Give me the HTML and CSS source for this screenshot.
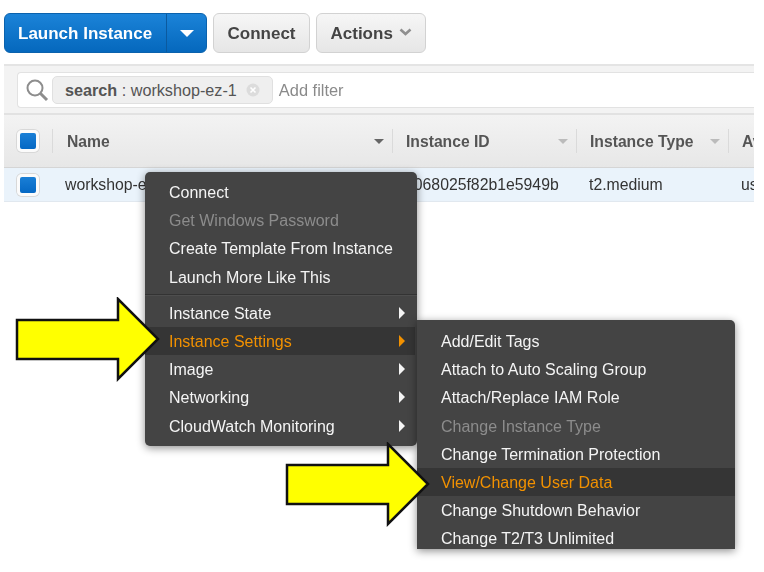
FILE: index.html
```html
<!DOCTYPE html>
<html lang="en">
<head>
    <meta charset="UTF-8">
    <meta name="viewport" content="width=device-width, initial-scale=1.0">
    <title>Instances</title>
    <link rel="stylesheet" href="styles.css">
</head>
<body>
    <div class="page">
        <div class="toolbar">
            <div class="btn-primary">
                <span class="btn-primary-label">Launch Instance</span>
                <span class="btn-primary-caret"><span class="caret-white"></span></span>
            </div>
            <div class="btn">Connect</div>
            <div class="btn">Actions
                <svg class="chevron" width="13" height="8" viewBox="0 0 13 8"><path d="M1.5 1.5 L6.5 6 L11.5 1.5" fill="none" stroke="#8f8f8f" stroke-width="2.6"/></svg>
            </div>
        </div>

        <div class="filter-panel">
            <div class="filter-box">
                <svg class="search-icon" width="24" height="24" viewBox="0 0 24 24">
                    <circle cx="10" cy="10" r="7.5" fill="none" stroke="#8d8d8d" stroke-width="2"/>
                    <path d="M15.5 15.5 L22 22" stroke="#8d8d8d" stroke-width="3"/>
                </svg>
                <div class="token">
                    <span><b>search</b> : workshop-ez-1</span>
                    <svg width="14" height="14" viewBox="0 0 14 14">
                        <circle cx="7" cy="7" r="6.5" fill="#dcdcdc"/>
                        <path d="M4.5 4.5 L9.5 9.5 M9.5 4.5 L4.5 9.5" stroke="#fff" stroke-width="1.6"/>
                    </svg>
                </div>
                <span class="add-filter">Add filter</span>
            </div>
        </div>

        <div class="table-row table-head">
            <div class="cell-check"><span class="check"></span></div>
            <div class="cell cell-name">Name<span class="sort sort-dark"></span></div>
            <div class="cell cell-id">Instance ID<span class="sort"></span></div>
            <div class="cell cell-type">Instance Type<span class="sort"></span></div>
            <div class="cell cell-zone">Av</div>
        </div>
        <div class="table-row table-body">
            <div class="cell-check"><span class="check"></span></div>
            <div class="cell cell-name">workshop-ez-1</div>
            <div class="cell cell-id">i-068025f82b1e5949b</div>
            <div class="cell cell-type">t2.medium</div>
            <div class="cell cell-zone">us</div>
        </div>

        <div class="menu menu-main">
            <div class="menu-item">Connect</div>
            <div class="menu-item disabled">Get Windows Password</div>
            <div class="menu-item">Create Template From Instance</div>
            <div class="menu-item">Launch More Like This</div>
            <div class="menu-divider"></div>
            <div class="menu-item has-sub">Instance State</div>
            <div class="menu-item has-sub active">Instance Settings</div>
            <div class="menu-item has-sub">Image</div>
            <div class="menu-item has-sub">Networking</div>
            <div class="menu-item has-sub">CloudWatch Monitoring</div>
        </div>

        <div class="menu menu-sub">
            <div class="menu-item">Add/Edit Tags</div>
            <div class="menu-item">Attach to Auto Scaling Group</div>
            <div class="menu-item">Attach/Replace IAM Role</div>
            <div class="menu-item disabled">Change Instance Type</div>
            <div class="menu-item">Change Termination Protection</div>
            <div class="menu-item active">View/Change User Data</div>
            <div class="menu-item">Change Shutdown Behavior</div>
            <div class="menu-item">Change T2/T3 Unlimited</div>
        </div>

        <svg class="arrow arrow-one" width="146" height="86" viewBox="0 0 146 86">
            <path d="M2 23 H103 V2 L143 42 L103 82 V62 H2 Z" fill="#ffff00" stroke="#111" stroke-width="2.5"/>
        </svg>
        <svg class="arrow arrow-two" width="146" height="86" viewBox="0 0 146 86">
            <path d="M2 23 H103 V2 L143 42 L103 82 V62 H2 Z" fill="#ffff00" stroke="#111" stroke-width="2.5"/>
        </svg>
    </div>
</body>
</html>
```

FILE: styles.css
```css
html, body {
    margin: 0;
    padding: 0;
    background-color: #fff;
}

body {
    width: 764px;
    height: 572px;
    overflow: hidden;
    font-family: "Liberation Sans", Arial, sans-serif;
    font-size: 15.8px;
    color: #333;
}

.page {
    position: relative;
    width: 754px;
    height: 572px;
    overflow: hidden;
    padding-top: 13px;
    box-sizing: border-box;
    filter: blur(0.6px);
}

/* toolbar */
.toolbar {
    display: flex;
    gap: 6px;
    height: 40px;
    margin: 0 0 11px 4px;
}

.btn-primary {
    display: flex;
    width: 203px;
    background: linear-gradient(#1b83d8, #0568bd);
    border: 1px solid #0a62ad;
    border-radius: 6px;
    box-sizing: border-box;
    color: #fff;
    font-size: 17px;
    font-weight: bold;
}

.btn-primary-label {
    flex: 1;
    padding-left: 13px;
    line-height: 40px;
}

.btn-primary-caret {
    width: 39px;
    border-left: 1px solid #0b5a9f;
    display: flex;
    align-items: center;
    justify-content: center;
}

.caret-white {
    border-left: 7px solid transparent;
    border-right: 7px solid transparent;
    border-top: 7px solid #fff;
}

.btn {
    display: flex;
    align-items: center;
    gap: 6px;
    padding: 2px 13.5px 0;
    background: linear-gradient(#f6f6f6, #e6e6e6);
    border: 1px solid #d2d2d2;
    border-radius: 6px;
    color: #444;
    font-size: 17px;
    font-weight: bold;
}

.chevron {
    margin-top: -4px;
}

/* filter */
.filter-panel {
    margin-left: 4px;
    height: 51px;
    padding: 6px 0 0 13px;
    box-sizing: border-box;
    background-color: #f3f3f3;
    border-top: 2px solid #e4e4e4;
    border-bottom: 2px solid #e2e2e2;
}

.filter-box {
    display: flex;
    align-items: center;
    height: 36px;
    box-sizing: border-box;
    margin-right: -1px;
    padding-left: 7px;
    background-color: #fff;
    border: 1px solid #e2e2e2;
    border-right: none;
    border-radius: 4px 0 0 4px;
}

.search-icon {
    margin-right: 3px;
}

.token {
    display: flex;
    align-items: center;
    gap: 9px;
    height: 26px;
    padding: 0 12px;
    background-color: #efefef;
    border: 1px solid #e0e0e0;
    border-radius: 5px;
    color: #555;
    font-size: 16.2px;
    white-space: nowrap;
}

.add-filter {
    margin-left: 6px;
    color: #8a8a8a;
    font-size: 16.4px;
}

/* table */
.table-row {
    display: grid;
    grid-template-columns: 48px 340px 184px 152px 40px;
    margin-left: 4px;
    align-items: center;
    white-space: nowrap;
}

.table-head {
    height: 53px;
    background: linear-gradient(#f3f3f3, #e7e7e7);
    border-bottom: 1px solid #d5d5d5;
    box-sizing: border-box;
    font-weight: bold;
    color: #555;
    font-size: 15.7px;
}

.table-body {
    height: 34px;
    padding-top: 1px;
    background-color: #eaf3fb;
    border-bottom: 1px solid #e1e8ef;
    box-sizing: border-box;
    color: #333;
}

.cell-check {
    display: flex;
    justify-content: center;
}

.check {
    width: 16px;
    height: 16px;
    background: linear-gradient(#1a7fd6, #0568c4);
    border: 3px solid #fbfbfb;
    box-shadow: 0 0 0 1px #d8d8d8;
    border-radius: 5px;
}

.cell {
    position: relative;
    padding-left: 13px;
    overflow: hidden;
}

.table-head .cell {
    border-left: 1px solid #dadada;
    height: 24px;
    line-height: 26px;
}

.table-head .cell-name {
    padding-left: 14px;
}

.sort {
    position: absolute;
    right: 8px;
    top: 10px;
    border-left: 5px solid transparent;
    border-right: 5px solid transparent;
    border-top: 5px solid #bbb;
}

.sort-dark {
    border-top-color: #666;
}

/* menus */
.menu {
    position: absolute;
    box-sizing: border-box;
    background-color: #444;
    color: #f4f4f4;
    font-size: 16px;
    box-shadow: 0 2px 8px rgba(0, 0, 0, 0.45);
}

.menu-main {
    left: 145px;
    top: 172px;
    width: 272px;
    height: 274px;
    padding-top: 6px;
    border-radius: 5px;
}

.menu-sub {
    left: 417px;
    top: 320px;
    width: 318px;
    height: 229px;
    padding-top: 7px;
    overflow: hidden;
    border-radius: 0 5px 0 0;
}

.menu-item {
    position: relative;
    height: 28.2px;
    line-height: 29px;
    padding-left: 24px;
    white-space: nowrap;
}

.menu-main .active {
    margin-right: 2px;
}

.menu-divider {
    height: 1px;
    margin: 3px 0;
    background-color: #333;
    border-bottom: 1px solid #4e4e4e;
}

.disabled {
    color: #8c8c8c;
}

.active {
    background-color: #353535;
    color: #f29100;
}

.has-sub::after {
    content: "";
    position: absolute;
    right: 12px;
    top: 8px;
    border-top: 6px solid transparent;
    border-bottom: 6px solid transparent;
    border-left: 6px solid #f4f4f4;
}

.has-sub.active::after {
    right: 10px;
    border-left-color: #f29100;
}

/* callouts */
.arrow {
    position: absolute;
}

.arrow-one {
    left: 15px;
    top: 297px;
}

.arrow-two {
    left: 285px;
    top: 442px;
}
```
